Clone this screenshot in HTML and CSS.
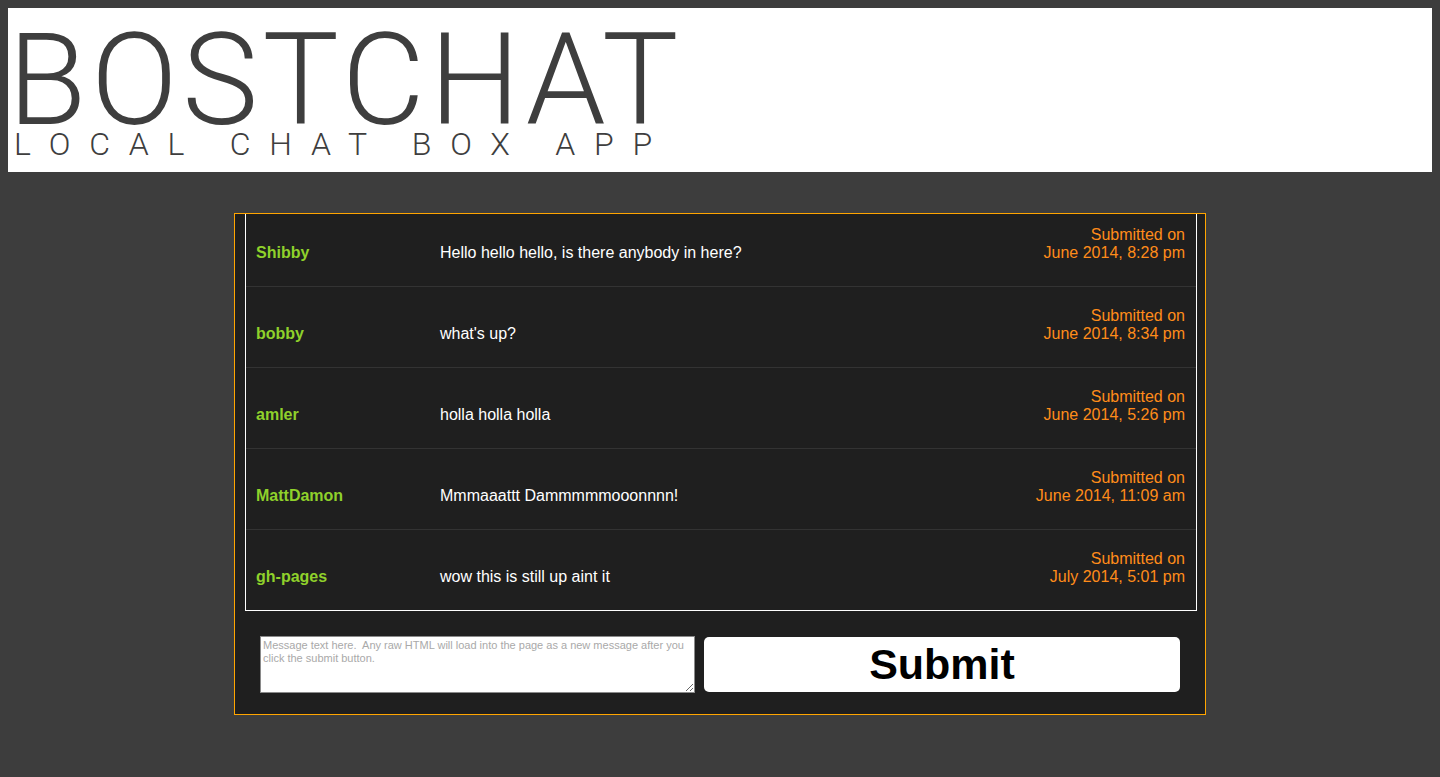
FILE: index.html
```html
<!DOCTYPE html>
<html lang="en">
<head>
<meta charset="utf-8">
<title>BOSTCHAT</title>
<link rel="stylesheet" href="styles.css">
</head>
<body>
<header class="banner">
  <h1 class="title">BOSTCHAT</h1>
  <p class="subtitle">LOCAL CHAT BOX APP</p>
</header>
<main class="chatbox">
  <div class="messages">
    <div class="msg msg-first">
      <span class="user">Shibby</span>
      <span class="text">Hello hello hello, is there anybody in here?</span>
      <span class="date">Submitted on<br>June 2014, 8:28 pm</span>
    </div>
    <div class="msg">
      <span class="user">bobby</span>
      <span class="text">what's up?</span>
      <span class="date">Submitted on<br>June 2014, 8:34 pm</span>
    </div>
    <div class="msg">
      <span class="user">amler</span>
      <span class="text">holla holla holla</span>
      <span class="date">Submitted on<br>June 2014, 5:26 pm</span>
    </div>
    <div class="msg">
      <span class="user">MattDamon</span>
      <span class="text">Mmmaaattt Dammmmmooonnnn!</span>
      <span class="date">Submitted on<br>June 2014, 11:09 am</span>
    </div>
    <div class="msg">
      <span class="user">gh-pages</span>
      <span class="text">wow this is still up aint it</span>
      <span class="date">Submitted on<br>July 2014, 5:01 pm</span>
    </div>
  </div>
  <form class="compose">
    <textarea class="input" placeholder="Message text here.  Any raw HTML will load into the page as a new message after you click the submit button."></textarea>
    <button type="button" class="submit">Submit</button>
  </form>
</main>
</body>
</html>
```

FILE: styles.css
```css
html, body {
  background: #3d3d3d;
}
body {
  margin: 8px;
  font-family: "Liberation Sans", Arial, sans-serif;
}
.banner {
  background: #ffffff;
  height: 164px;
  box-sizing: border-box;
  padding: 20px 0 0 0;
  overflow: hidden;
}
.title {
  margin: 0;
  font-family: Roboto, "Liberation Sans", sans-serif;
  font-weight: 300;
  font-size: 128px;
  line-height: 104px;
  letter-spacing: 4.5px;
  color: #3e3e3e;
  white-space: nowrap;
}
.subtitle {
  margin: 0;
  padding-left: 6px;
  font-family: Roboto, "Liberation Sans", sans-serif;
  font-weight: 300;
  font-size: 32px;
  line-height: 24px;
  letter-spacing: 18.8px;
  color: #3e3e3e;
  white-space: nowrap;
}
.chatbox {
  width: 972px;
  box-sizing: border-box;
  margin: 41px auto 0;
  background: #1f1f1f;
  border: 1px solid #ffa500;
}
.messages {
  margin: 0 8px 0 10px;
  border: 1px solid #ffffff;
  border-top: none;
}
.msg {
  display: grid;
  grid-template-columns: 194px 1fr auto;
  align-items: end;
  padding: 20px 11px 24px 0;
  border-bottom: 1px solid #333333;
  font-size: 16px;
  line-height: 18px;
}
.msg:last-child {
  border-bottom: none;
}
.msg-first {
  padding-top: 12px;
}
.user {
  padding-left: 10px;
  font-weight: bold;
  color: #8fd12b;
}
.text {
  color: #ffffff;
}
.date {
  text-align: right;
  color: #ff8c1a;
}
.compose {
  display: flex;
  align-items: center;
  gap: 9px;
  margin: 0;
  padding: 25px 25px 21px;
}
.input {
  width: 435px;
  height: 57px;
  box-sizing: border-box;
  margin: 0;
  padding: 2px;
  border: 1px solid #8a8a8a;
  background: #ffffff;
  font-family: "Liberation Sans", Arial, sans-serif;
  font-size: 11px;
  line-height: 13px;
  resize: both;
}
.input::placeholder {
  color: #a9a9a9;
}
.submit {
  flex: 1;
  height: 55px;
  margin: 0;
  border: none;
  border-radius: 5px;
  background: #ffffff;
  color: #000000;
  font-family: "Liberation Sans", Arial, sans-serif;
  font-weight: bold;
  font-size: 43px;
  line-height: 55px;
  padding: 0;
}
```
